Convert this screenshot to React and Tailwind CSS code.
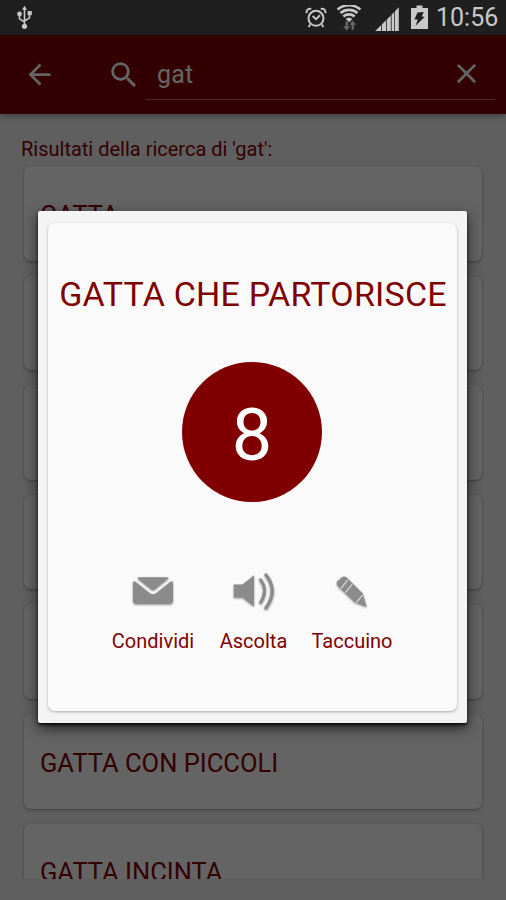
import { useState } from "react";
import { MdArrowBack, MdClose, MdSearch } from "react-icons/md";

const RESULTS = [
  "GATTA",
  "GATTA BIANCA",
  "GATTA CHE DORME",
  "GATTA CHE GRAFFIA",
  "GATTA CHE PARTORISCE",
  "GATTA CON PICCOLI",
  "GATTA INCINTA",
];

function UsbIcon() {
  return (
    <svg className="ml-4 h-6 w-[17px]" viewBox="0 0 17 24" fill="none" stroke="#c8c8c8" strokeWidth="1.6">
      <path d="M8.500 3v17M8.500 17l-5-3.200V9M8.500 16l5-3.200V7.500" />
      <path d="M6 4.800 8.500.7 11 4.800z" fill="#c8c8c8" stroke="none" />
      <circle cx="8.500" cy="21.300" r="2.600" fill="#c8c8c8" stroke="none" />
      <circle cx="3.500" cy="9" r="2.400" fill="#c8c8c8" stroke="none" />
      <path d="M11.600 6h4.200v4.200h-4.200z" fill="#c8c8c8" stroke="none" />
    </svg>
  );
}

function AlarmIcon() {
  return (
    <svg className="h-[22px] w-[22px]" viewBox="0 0 22 22" fill="none" stroke="#c8c8c8" strokeWidth="2">
      <circle cx="11" cy="11.300" r="7.500" />
      <path d="M1.800 6.200a3.300 3.300 0 0 1 4.400-4.200M20.200 6.200a3.300 3.300 0 0 0-4.400-4.200M5.200 17.500 3.600 20M16.800 17.500l1.600 2.500M7.600 9l3.400 3.200L15 8.300" />
    </svg>
  );
}

function WifiIcon() {
  return (
    <svg className="h-[26px] w-[26px]" viewBox="0 0 26 26" fill="none" stroke="#c8c8c8" strokeWidth="2.600">
      <path d="M1.600 4.500a17.500 17.500 0 0 1 22.800 0M4.500 8a13 13 0 0 1 17 0M7.300 11.500a8.600 8.600 0 0 1 11.400 0" />
      <path d="M9.600 14a5 5 0 0 1 6.800 0L13 17.500z" fill="#c8c8c8" stroke="none" />
      <path d="M9.200 16v5H6.700l4 5 4-5h-2.500v-5zM15.200 25v-5h-2.500l4-4.500 4 4.500h-2.500v5z" fill="#6a6a6a" stroke="#1f1f1f" strokeWidth=".6" />
    </svg>
  );
}

function SignalIcon() {
  return (
    <svg className="h-6 w-6" viewBox="0 0 24 24" fill="#c8c8c8">
      <path d="M.2 24 6 18.200V24zM6.800 17.400l4.200-4.200V24H6.800zM11.800 12.400l4-4V24h-4zM16.600 7.600l2.600-2.600V24h-2.600zM19.900 4.300 23.800.3V24h-3.900z" />
    </svg>
  );
}

function BatteryIcon() {
  return (
    <svg className="h-6 w-[17px]" viewBox="0 0 17 24">
      <path d="M5.500.500h6V3H17v21H0V3h5.500z" fill="#c8c8c8" />
      <path d="m6.500 7.500 6.300-.5-2.200 4.600 3.200.2-9.200 9 2.200-6.300-3.400.1z" fill="#1f1f1f" />
    </svg>
  );
}

function MailIcon() {
  return (
    <svg className="h-10 w-12 drop-shadow-[0_1px_1px_rgba(0,0,0,0.4)]" viewBox="0 0 48 40" fill="#8b8b8b">
      <path d="M9.500 6.300h29q1.500.4.500 1.500L26 18.300q-2 1.400-4 0L9 7.800q-1-1.100.5-1.500z" />
      <path d="M4 12q0-2.600 2.600-1.200l14 11.200q3.400 2.400 6.800 0l14-11.200Q44 9.400 44 12v17.500q0 3.500-3.500 3.500h-33Q4 33 4 29.500z" />
    </svg>
  );
}

function SoundIcon() {
  return (
    <svg className="h-10 w-12 drop-shadow-[0_1px_1px_rgba(0,0,0,0.4)]" viewBox="0 0 48 40" fill="none" stroke="#8b8b8b" strokeLinecap="round">
      <path d="M3.800 13.500h8.700L24 4.200v31.300l-11.500-9H3.800z" fill="#8b8b8b" stroke="none" />
      <path d="M30.600 8.800Q38.500 19 30.600 31.500" strokeWidth="3" />
      <path d="M36 4Q48.500 19.500 36 37" strokeWidth="3.300" />
    </svg>
  );
}

function PencilIcon() {
  return (
    <svg className="h-10 w-12 drop-shadow-[0_1px_1px_rgba(0,0,0,0.4)]" viewBox="0 0 48 40">
      <path d="M9.500 10.300 14 6.200q2.300-1.600 4.700.3L34.800 22.500 38.700 36 26.700 31.200 10.200 15.500q-2.600-2.700-.7-5.200z" fill="#8b8b8b" />
      <path d="m12.900 17.600 6.800-8.700M17.400 21.700l6.900-8.500M28.400 31.400l6.500-7.600" stroke="#dedede" strokeWidth="1.100" />
    </svg>
  );
}

function StatusBar() {
  return (
    <header className="flex h-[35px] shrink-0 items-start justify-between bg-[#1f1f1f] pt-[5px] pr-[8px] text-[#c8c8c8]">
      <UsbIcon />
      <div className="flex items-start">
        <div className="mt-[2px] mr-[9px]"><AlarmIcon /></div>
        <div className="mr-[13px]"><WifiIcon /></div>
        <div className="mt-[2px] mr-[12px]"><SignalIcon /></div>
        <div className="mr-[8px]"><BatteryIcon /></div>
        <span className="w-[62px] text-right text-[25px] leading-[25px] whitespace-nowrap">10:56</span>
      </div>
    </header>
  );
}

function SearchBar({ query, onChange }) {
  return (
    <div className="z-10 flex h-[79px] shrink-0 items-center bg-[#800000] pr-[11px] pl-[23px] text-[#fafafa] shadow-[0_2px_5px_rgba(0,0,0,0.35)]">
      <MdArrowBack className="size-[33px]" />
      <MdSearch className="ml-[51px] size-[34px]" />
      <div className="ml-[5px] flex h-[50px] flex-1 items-center border-b border-[#fafafa]/45 pr-[12px] pl-[11px]">
        <input
          value={query}
          onChange={(e) => onChange(e.target.value)}
          className="mt-[2px] w-0 flex-1 text-[25px] tracking-[0.2px] outline-none"
        />
        <MdClose className="-mt-px size-[33px]" onClick={() => onChange("")} />
      </div>
    </div>
  );
}

function Action({ icon, label, className }) {
  return (
    <button className={`flex flex-col items-center ${className}`}>
      {icon}
      <span className="mt-[18px] text-[20px] leading-6 whitespace-nowrap">{label}</span>
    </button>
  );
}

export default function App() {
  const [query, setQuery] = useState("gat");

  return (
    <div className="relative flex h-[900px] w-[506px] flex-col overflow-hidden bg-[#ededed] font-['Roboto',sans-serif] text-[#800000] antialiased">
      <StatusBar />
      <SearchBar query={query} onChange={setQuery} />

      <main className="h-[765px] shrink-0 overflow-hidden px-6 pt-[23px]">
        <p className="-ml-[3px] text-[20px] leading-6">Risultati della ricerca di '{query}':</p>
        <ul className="mt-[5px] flex flex-col gap-[15px]">
          {RESULTS.map((name) => (
            <li
              key={name}
              className="flex h-[94.600px] shrink-0 items-center rounded-[7px] bg-[#fafafa] px-4 pt-[3px] text-[25.500px] shadow-[0_1px_3px_rgba(0,0,0,0.35)]"
            >
              {name}
            </li>
          ))}
        </ul>
      </main>

      {/* Backdrop and result dialog */}
      <div className="absolute inset-x-0 top-[35px] bottom-0 z-20 bg-black/60 pt-[176px] pl-[38px]">
        <section className="h-[512px] w-[429px] rounded-[2px] bg-[#f4f4f4] px-[10px] py-[12px] shadow-[0_2px_3px_rgba(0,0,0,0.8),0_5px_14px_rgba(0,0,0,0.65)]">
          <div className="flex h-[488px] flex-col items-center rounded-[7px] bg-[#fafafa] pt-[51px] shadow-[0_1px_3px_rgba(0,0,0,0.3)]">
            <h1 className="ml-px text-[34px] leading-10 tracking-[0.2px] whitespace-nowrap">GATTA CHE PARTORISCE</h1>
            <div className="mt-[48px] mr-px flex size-[140px] items-center justify-center rounded-full bg-[#800000] pt-[8px] text-[72px] leading-none text-white">
              8
            </div>
            <div className="mt-[69px] flex w-full pl-[64px]">
              <Action icon={<MailIcon />} label="Condividi" className="w-[82px]" />
              <Action icon={<SoundIcon />} label="Ascolta" className="ml-[26px] w-[67px]" />
              <Action icon={<PencilIcon />} label="Taccuino" className="ml-[25px] w-[80px]" />
            </div>
          </div>
        </section>
      </div>
    </div>
  );
}
